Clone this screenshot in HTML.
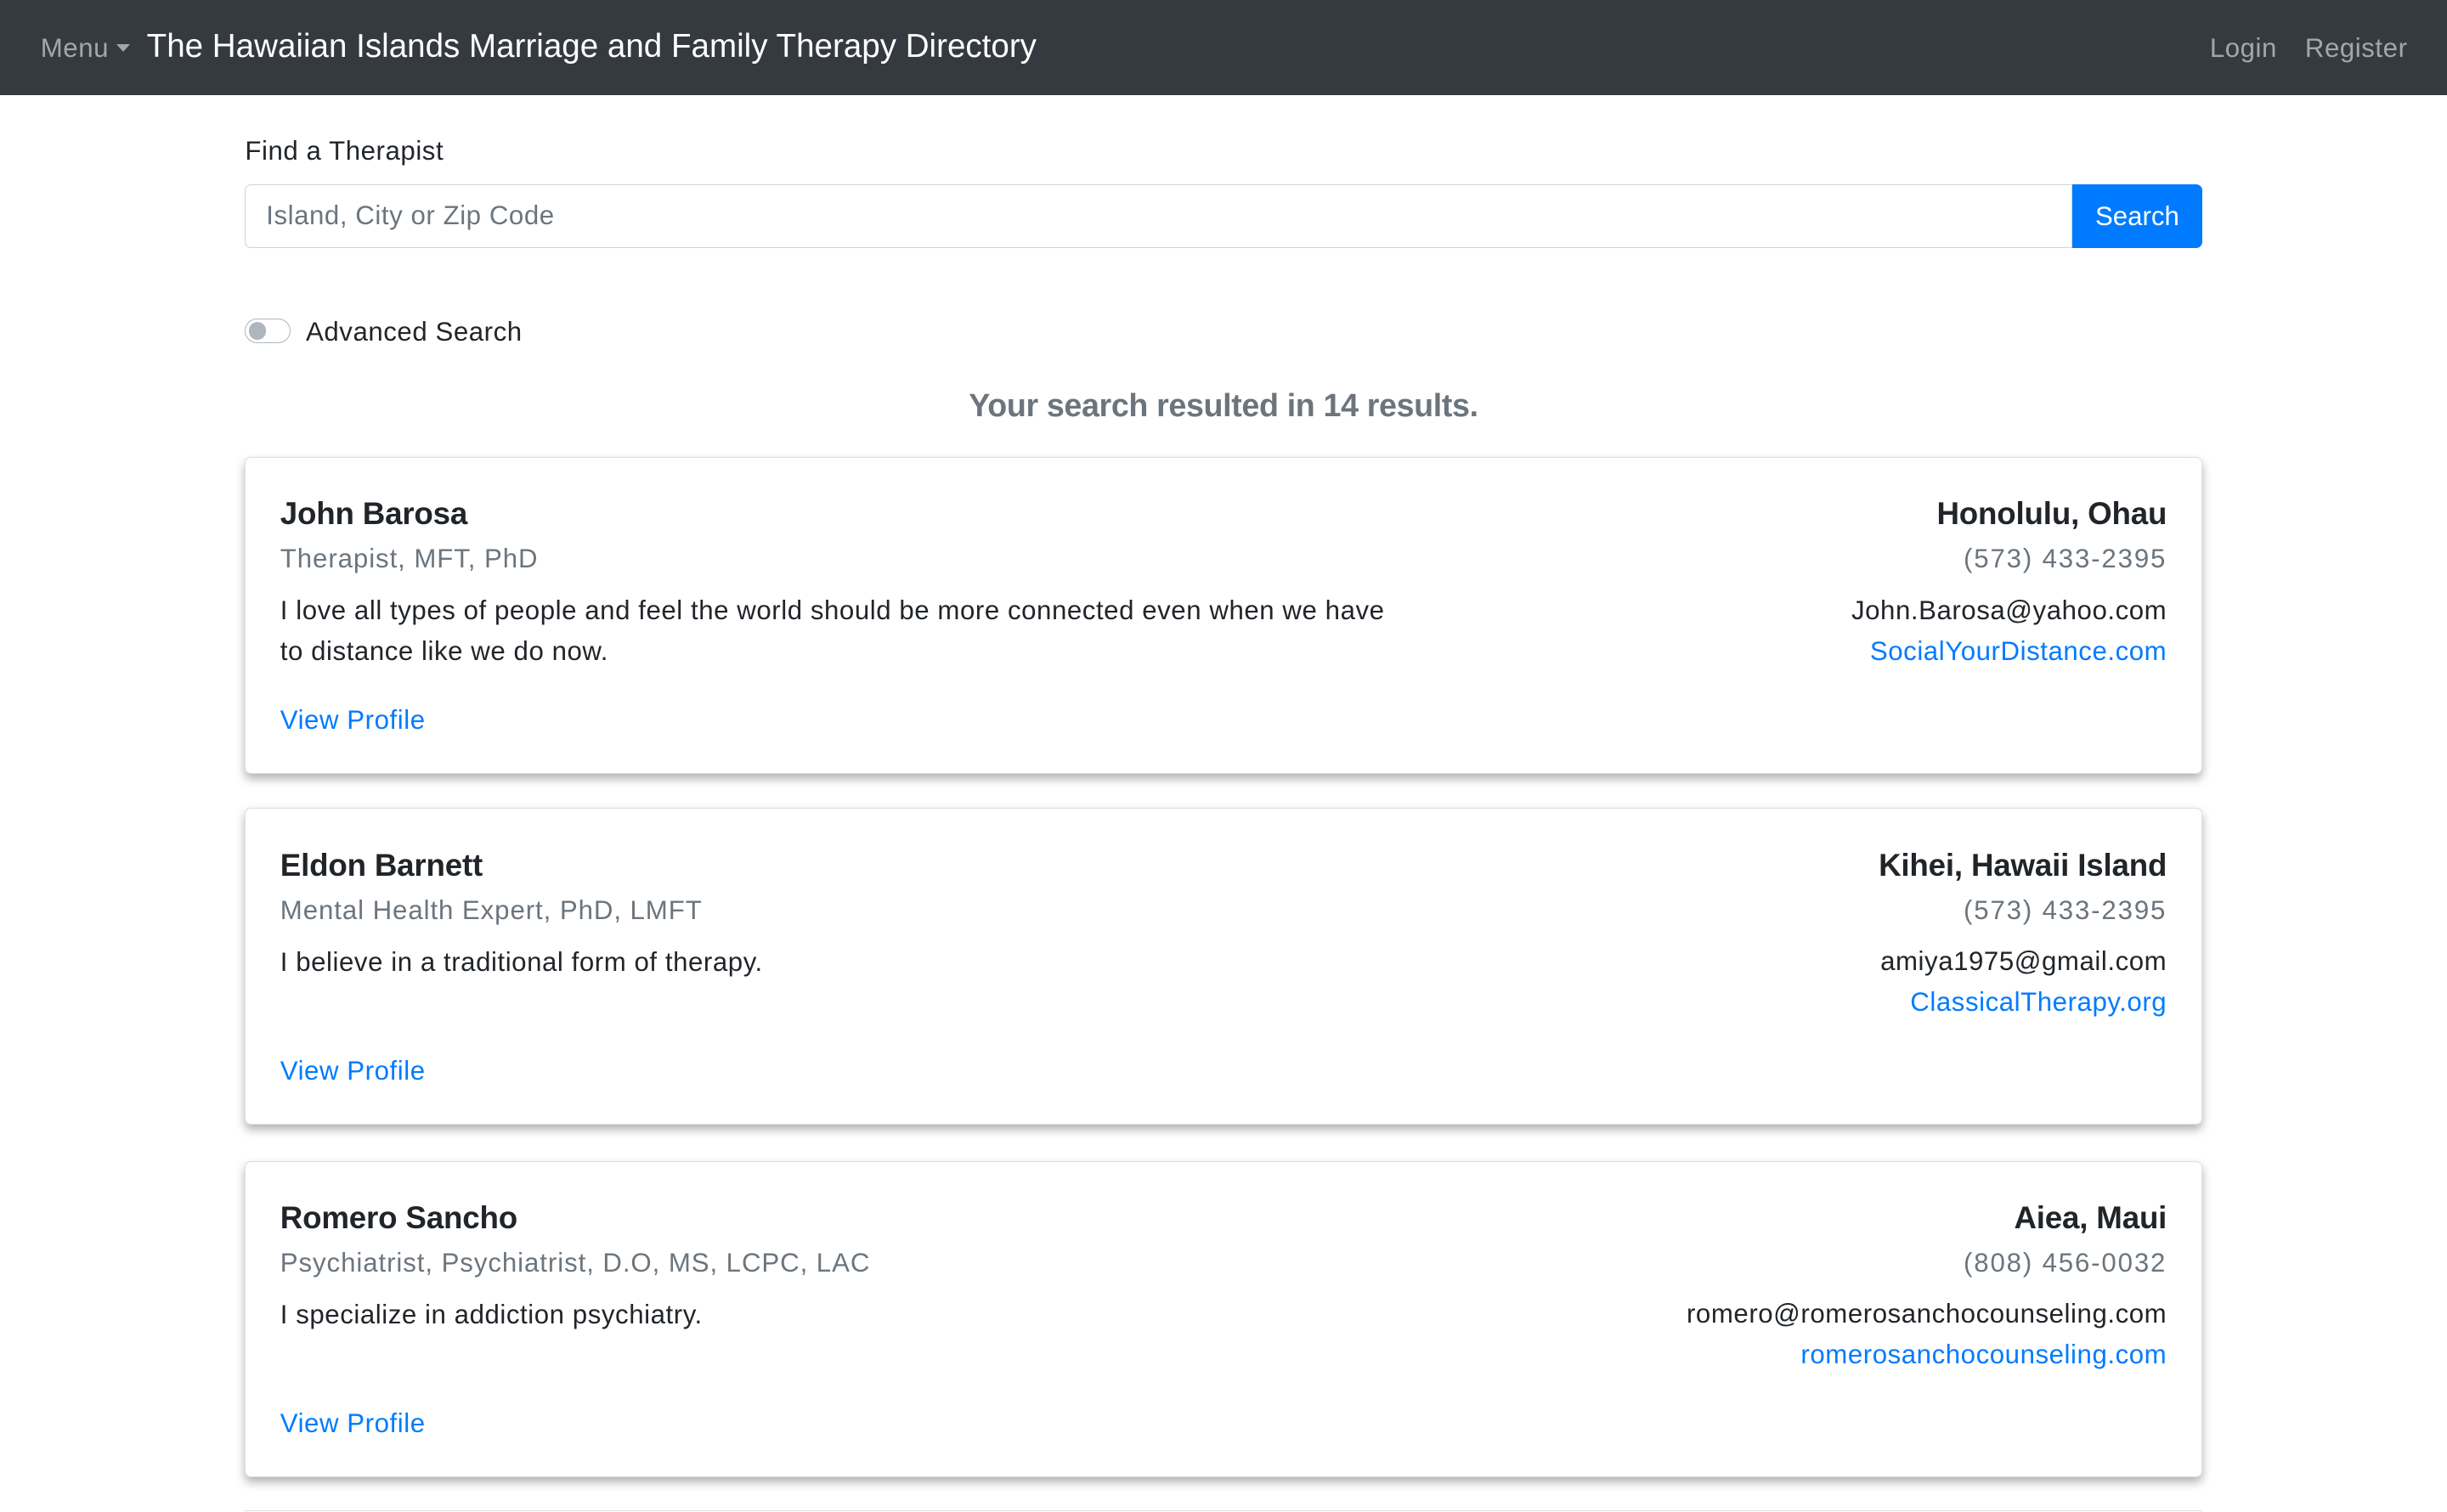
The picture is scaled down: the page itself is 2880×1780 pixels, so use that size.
<!DOCTYPE html>
<html><head><meta charset="utf-8"><style>
html{margin:0;padding:0;background:#fff;width:2880px;height:1780px;overflow:hidden}
body{margin:0;padding:0;background:#fff;width:1568px;height:969px;zoom:1.83674;overflow:hidden;font-family:"Liberation Sans",Arial,sans-serif;color:#212529;font-size:17px;letter-spacing:.3px;position:relative}
.nav{position:absolute;left:0;top:0;width:1568px;height:61px;background:#343a40}
.menu{position:absolute;left:26px;top:20px;color:rgba(255,255,255,.55);font-size:17px;line-height:22px}
.menu:after{content:"";display:inline-block;margin-left:5px;vertical-align:3px;border-top:5px solid rgba(255,255,255,.55);border-left:4.5px solid transparent;border-right:4.5px solid transparent}
.brand{position:absolute;left:94px;top:17px;color:#fff;font-size:21px;line-height:26px;letter-spacing:0}
.rn{position:absolute;top:20px;color:rgba(255,255,255,.55);font-size:17px;line-height:22px}
.lbl{position:absolute;left:157px;top:86px;line-height:22px}
.inp{position:absolute;left:157px;top:118px;width:1171px;height:41px;border:1px solid #ced4da;border-radius:4px 0 0 4px;box-sizing:border-box}
.inp span{position:absolute;left:13px;top:10px;color:#6c757d;line-height:20px}
.btn{position:absolute;left:1328px;top:118px;width:83px;height:41px;background:#007bff;border-radius:0 4px 4px 0;color:#fff;line-height:41px;text-align:center;letter-spacing:0}
.tog{position:absolute;left:157px;top:204px;width:28px;height:15px;border:1px solid #adb5bd;border-radius:9px}
.tog:before{content:"";position:absolute;left:2px;top:2px;width:11px;height:11px;border-radius:50%;background:#adb5bd}
.adv{position:absolute;left:196px;top:202px;line-height:22px}
.res{position:absolute;left:0;width:1568px;top:247px;text-align:center;font-size:20.5px;line-height:26px;color:#6c757d;font-weight:bold;letter-spacing:-.2px}
.card{position:absolute;left:157px;width:1254px;height:203px;box-sizing:border-box;border:1px solid rgba(0,0,0,.125);border-radius:4px;box-shadow:0 3px 6px rgba(0,0,0,.3);background:#fff}
.card div{position:absolute;white-space:nowrap}
.nm{left:22px;top:23px;font-size:20px;line-height:26px;font-weight:bold;letter-spacing:-.1px}
.st{left:22px;top:54px;line-height:22px;color:#6c757d;letter-spacing:.5px}
.tx{left:22px;top:85px;line-height:26px;white-space:normal!important;width:715px}
.vp{left:22px;top:157px;line-height:22px;color:#007bff}
.r{right:22px;text-align:right}
.ct{top:23px;font-size:20px;line-height:26px;font-weight:bold;letter-spacing:-.1px}
.ph{top:54px;line-height:22px;color:#6c757d;letter-spacing:1px}
.em{top:87px;line-height:22px}
.ws{top:113px;line-height:22px;color:#007bff}
</style></head><body>
<div class="nav"><span class="menu">Menu</span><span class="brand">The Hawaiian Islands Marriage and Family Therapy Directory</span><span class="rn" style="left:1416px">Login</span><span class="rn" style="left:1477px">Register</span></div>
<div class="lbl">Find a Therapist</div>
<div class="inp"><span>Island, City or Zip Code</span></div>
<div class="btn">Search</div>
<div class="tog"></div><div class="adv">Advanced Search</div>
<div class="res">Your search resulted in 14 results.</div>

<div class="card" style="top:293px">
<div class="nm">John Barosa</div><div class="st">Therapist, MFT, PhD</div>
<div class="tx">I love all types of people and feel the world should be more connected even when we have to distance like we do now.</div>
<div class="vp">View Profile</div>
<div class="r ct">Honolulu, Ohau</div><div class="r ph">(573) 433-2395</div><div class="r em">John.Barosa@yahoo.com</div><div class="r ws">SocialYourDistance.com</div>
</div>
<div class="card" style="top:518px">
<div class="nm">Eldon Barnett</div><div class="st">Mental Health Expert, PhD, LMFT</div>
<div class="tx">I believe in a traditional form of therapy.</div>
<div class="vp">View Profile</div>
<div class="r ct">Kihei, Hawaii Island</div><div class="r ph">(573) 433-2395</div><div class="r em">amiya1975@gmail.com</div><div class="r ws">ClassicalTherapy.org</div>
</div>
<div class="card" style="top:744px">
<div class="nm">Romero Sancho</div><div class="st">Psychiatrist, Psychiatrist, D.O, MS, LCPC, LAC</div>
<div class="tx">I specialize in addiction psychiatry.</div>
<div class="vp">View Profile</div>
<div class="r ct">Aiea, Maui</div><div class="r ph">(808) 456-0032</div><div class="r em">romero@romerosanchocounseling.com</div><div class="r ws">romerosanchocounseling.com</div>
</div>
<div class="card" style="top:968px;height:1px;box-shadow:none;border-bottom:0"></div>
</body></html>
